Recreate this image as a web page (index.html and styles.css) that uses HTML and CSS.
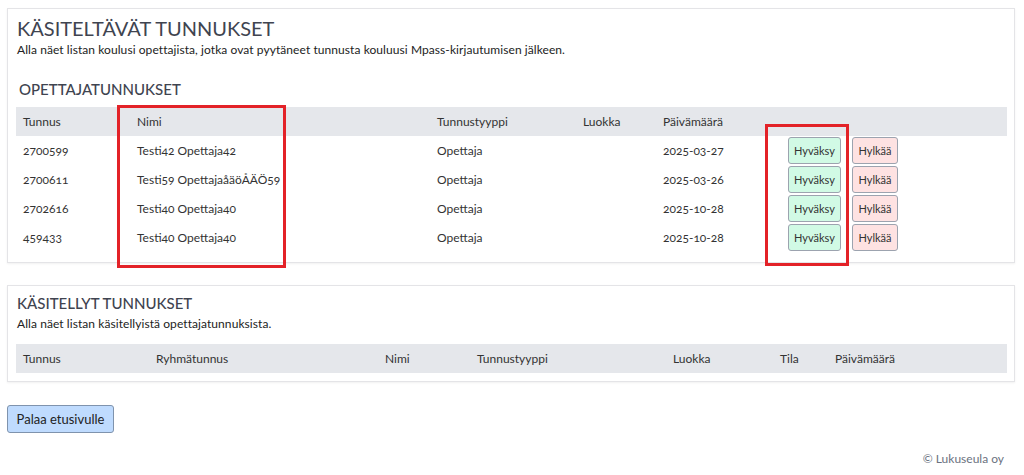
FILE: index.html
```html
<!DOCTYPE html>
<html lang="fi">
<head>
<meta charset="utf-8">
<title>Käsiteltävät tunnukset</title>
<link rel="stylesheet" href="styles.css">
</head>
<body>
<main class="page">
  <section class="card card-pending">
    <h1 class="title">KÄSITELTÄVÄT TUNNUKSET</h1>
    <p class="lead">Alla näet listan koulusi opettajista, jotka ovat pyytäneet tunnusta kouluusi Mpass-kirjautumisen jälkeen.</p>
    <h2 class="subtitle">OPETTAJATUNNUKSET</h2>
    <table class="grid grid-pending">
      <thead>
        <tr><th class="c1">Tunnus</th><th class="c2">Nimi</th><th class="c3">Tunnustyyppi</th><th class="c4">Luokka</th><th class="c5">Päivämäärä</th><th class="c6"></th></tr>
      </thead>
      <tbody>
        <tr><td>2700599</td><td>Testi42 Opettaja42</td><td>Opettaja</td><td></td><td>2025-03-27</td><td class="actions"><button class="btn btn-ok">Hyväksy</button><button class="btn btn-no">Hylkää</button></td></tr>
        <tr><td>2700611</td><td>Testi59 OpettajaåäöÅÄÖ59</td><td>Opettaja</td><td></td><td>2025-03-26</td><td class="actions"><button class="btn btn-ok">Hyväksy</button><button class="btn btn-no">Hylkää</button></td></tr>
        <tr><td>2702616</td><td>Testi40 Opettaja40</td><td>Opettaja</td><td></td><td>2025-10-28</td><td class="actions"><button class="btn btn-ok">Hyväksy</button><button class="btn btn-no">Hylkää</button></td></tr>
        <tr><td>459433</td><td>Testi40 Opettaja40</td><td>Opettaja</td><td></td><td>2025-10-28</td><td class="actions"><button class="btn btn-ok">Hyväksy</button><button class="btn btn-no">Hylkää</button></td></tr>
      </tbody>
    </table>
    <div class="mark mark-name"></div>
    <div class="mark mark-accept"></div>
  </section>

  <section class="card card-done">
    <h2 class="subtitle subtitle-top">KÄSITELLYT TUNNUKSET</h2>
    <p class="lead lead-done">Alla näet listan käsitellyistä opettajatunnuksista.</p>
    <table class="grid grid-done">
      <thead>
        <tr><th class="d1">Tunnus</th><th class="d2">Ryhmätunnus</th><th class="d3">Nimi</th><th class="d4">Tunnustyyppi</th><th class="d5">Luokka</th><th class="d6">Tila</th><th class="d7">Päivämäärä</th></tr>
      </thead>
      <tbody></tbody>
    </table>
  </section>

  <div class="back-row"><button class="btn-back">Palaa etusivulle</button></div>
  <footer class="footer">© Lukuseula oy</footer>
</main>
</body>
</html>
```

FILE: styles.css
```css
* { box-sizing: border-box; }
html, body { margin: 0; padding: 0; background: #ffffff; }
body {
  font-family: Lato, "Open Sans", "Liberation Sans", sans-serif;
  color: #333333;
  font-variant-numeric: oldstyle-nums;
}
.page { padding: 8px 9px 0 7px; display: flex; flex-direction: column; }
.card {
  position: relative;
  border: 1px solid #e4e4e7;
  box-shadow: 0 1px 2px rgba(0,0,0,0.06);
  background: #fff;
  padding: 0 8px 10px 8px;
}
.card-pending { padding-top: 7px; }
.card-done { margin-top: 22px; padding-top: 7px; padding-bottom: 8px; }
.title {
  margin: 0 0 0 1px;
  font-size: 20px;
  font-weight: 400;
  color: #3f4450;
  line-height: 25px;
}
.lead { margin: 0 0 0 1px; font-size: 12px; color: #222; line-height: 17px; letter-spacing: 0.07px; }
.lead-done { margin-top: 2px; }
.subtitle {
  margin: 21px 0 8px 3px;
  font-size: 15px;
  font-weight: 500;
  color: #3f4450;
  line-height: 20px;
}
.subtitle-top { margin: 0 0 0 1px; line-height: 20px; }
.grid { border-collapse: collapse; table-layout: fixed; width: 991px; font-size: 12px; }
.grid th { background: #e5e7eb; font-weight: 400; text-align: left; height: 29px; padding: 0 7px; color: #333; }
.grid td { height: 29px; padding: 0 7px; color: #333; }
.grid-done { margin-top: 12px; }
.c1 { width: 114px; } .c2 { width: 300px; } .c3 { width: 146px; } .c4 { width: 80px; } .c5 { width: 125px; } .c6 { width: auto; }
.d1 { width: 133px; } .d2 { width: 229px; } .d3 { width: 92px; } .d4 { width: 196px; } .d5 { width: 107px; } .d6 { width: 55px; } .d7 { width: auto; }
.actions { padding: 1px 7px; }
.btn {
  font-family: inherit;
  font-size: 11px;
  height: 27px;
  padding: 0 5px;
  border: 1px solid #9ca3af;
  border-radius: 3px;
  color: #333;
  vertical-align: middle;
  font-variant-numeric: normal;
}
.btn-ok { background: #d1fae5; width: 53px; margin-right: 11px; }
.btn-no { background: #fee2e2; width: 46px; }
.mark { position: absolute; border: 3px solid #e32228; }
.mark-name { left: 109px; top: 96px; width: 169px; height: 163px; }
.mark-accept { left: 757px; top: 115px; width: 84px; height: 142px; }
.back-row { margin-top: 23px; display: flex; }
.btn-back {
  font-family: inherit;
  font-size: 13px;
  background: #bfdbfe;
  border: 1px solid #7f93ad;
  border-radius: 3px;
  height: 28px;
  width: 107px;
  padding: 0;
  color: #222;
}
.footer { text-align: right; font-size: 12px; color: #6b7280; margin-top: 18px; padding-right: 11px; }
```
